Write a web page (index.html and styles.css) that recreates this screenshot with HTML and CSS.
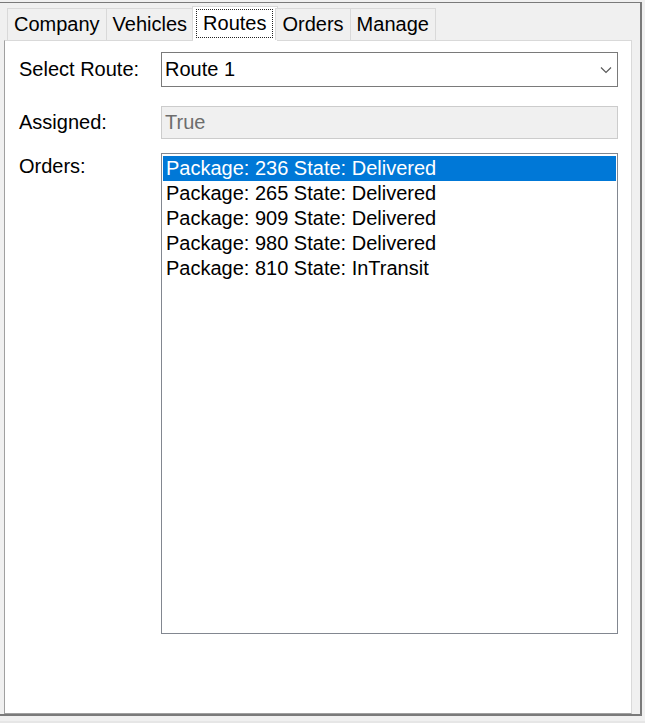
FILE: index.html
```html
<!DOCTYPE html>
<html>
<head>
<meta charset="utf-8">
<title>Routes</title>
<link rel="stylesheet" href="styles.css">
</head>
<body>
<div class="page">
  <div class="window">
    <div class="tabs">
      <div class="tab">Company</div>
      <div class="tab">Vehicles</div>
      <div class="tab selected"><span class="focus">Routes</span></div>
      <div class="tab">Orders</div>
      <div class="tab">Manage</div>
    </div>
    <div class="panel">
      <div class="row row-route">
        <div class="label">Select Route:</div>
        <div class="combo">
          <span class="combo-text">Route 1</span>
          <svg class="chevron" width="12" height="8" viewBox="0 0 12 8"><polyline points="1,1.5 6,6.5 11,1.5" fill="none" stroke="#5a5a5a" stroke-width="1.2"/></svg>
        </div>
      </div>
      <div class="row row-assigned">
        <div class="label">Assigned:</div>
        <div class="textbox">True</div>
      </div>
      <div class="row row-orders">
        <div class="label label-top">Orders:</div>
        <div class="listbox">
          <div class="item active">Package: 236 State: Delivered</div>
          <div class="item">Package: 265 State: Delivered</div>
          <div class="item">Package: 909 State: Delivered</div>
          <div class="item">Package: 980 State: Delivered</div>
          <div class="item">Package: 810 State: InTransit</div>
        </div>
      </div>
    </div>
  </div>
</div>
</body>
</html>
```

FILE: styles.css
```css
html, body {
  margin: 0;
  padding: 0;
}
body {
  background: #e6e6e6;
  font-family: "Liberation Sans", Arial, sans-serif;
  font-size: 20px;
  color: #000;
}
.page {
  padding-top: 2px;
  height: 721px;
  background: #f0f0f0;
  box-sizing: border-box;
}
.window {
  width: 642px;
  height: 714px;
  box-sizing: border-box;
  background: #f0f0f0;
  border-top: 1px solid #7a7a7a;
  border-right: 2px solid #7a7a7a;
  border-bottom: 2px solid #7a7a7a;
  padding: 3px 8px 0 4px;
  display: flex;
  flex-direction: column;
}
.tabs {
  display: flex;
  align-items: flex-end;
  height: 34px;
  padding-left: 3px;
  position: relative;
  z-index: 1;
}
.tab {
  height: 32px;
  box-sizing: border-box;
  border: 1px solid #d9d9d9;
  border-bottom: none;
  background: #f0f0f0;
  padding: 0 6px;
  line-height: 31px;
  margin-left: -1px;
  white-space: nowrap;
}
.tab:first-child {
  margin-left: 0;
}
.tab.selected {
  height: 35px;
  margin: 0 -2px -1px -2px;
  background: #fff;
  padding: 2px 4px 0 3px;
  display: flex;
  align-items: flex-start;
}
.focus {
  display: block;
  outline: 1px dotted #222;
  outline-offset: -1px;
  padding: 0 7px 0 7px;
  height: 29px;
  line-height: 28px;
}
.panel {
  flex: 1;
  background: #fff;
  border: 1px solid #d9d9d9;
  border-left-color: #a0a0a0;
  border-bottom-color: #a0a0a0;
  padding: 11px 0 0 14px;
  display: flex;
  flex-direction: column;
}
.row {
  display: flex;
  align-items: center;
}
.label {
  width: 142px;
  flex: none;
}
.label-top {
  align-self: flex-start;
  padding-top: 2px;
}
.row-assigned {
  margin-top: 19px;
}
.row-orders {
  margin-top: 14px;
  align-items: flex-start;
}
.combo {
  width: 457px;
  height: 35px;
  box-sizing: border-box;
  border: 1px solid #7a7a7a;
  background: #fff;
  display: flex;
  align-items: center;
  justify-content: space-between;
  padding: 0 5px 0 3px;
}
.chevron {
  display: block;
}
.textbox {
  width: 457px;
  height: 33px;
  box-sizing: border-box;
  border: 1px solid #cccccc;
  background: #f0f0f0;
  color: #6d6d6d;
  padding-left: 3px;
  line-height: 31px;
}
.listbox {
  width: 457px;
  height: 481px;
  box-sizing: border-box;
  border: 1px solid #828790;
  padding: 2px 1px;
}
.item {
  height: 25px;
  line-height: 25px;
  padding-left: 3px;
  white-space: nowrap;
}
.item.active {
  background: #0078d7;
  color: #fff;
}
```
